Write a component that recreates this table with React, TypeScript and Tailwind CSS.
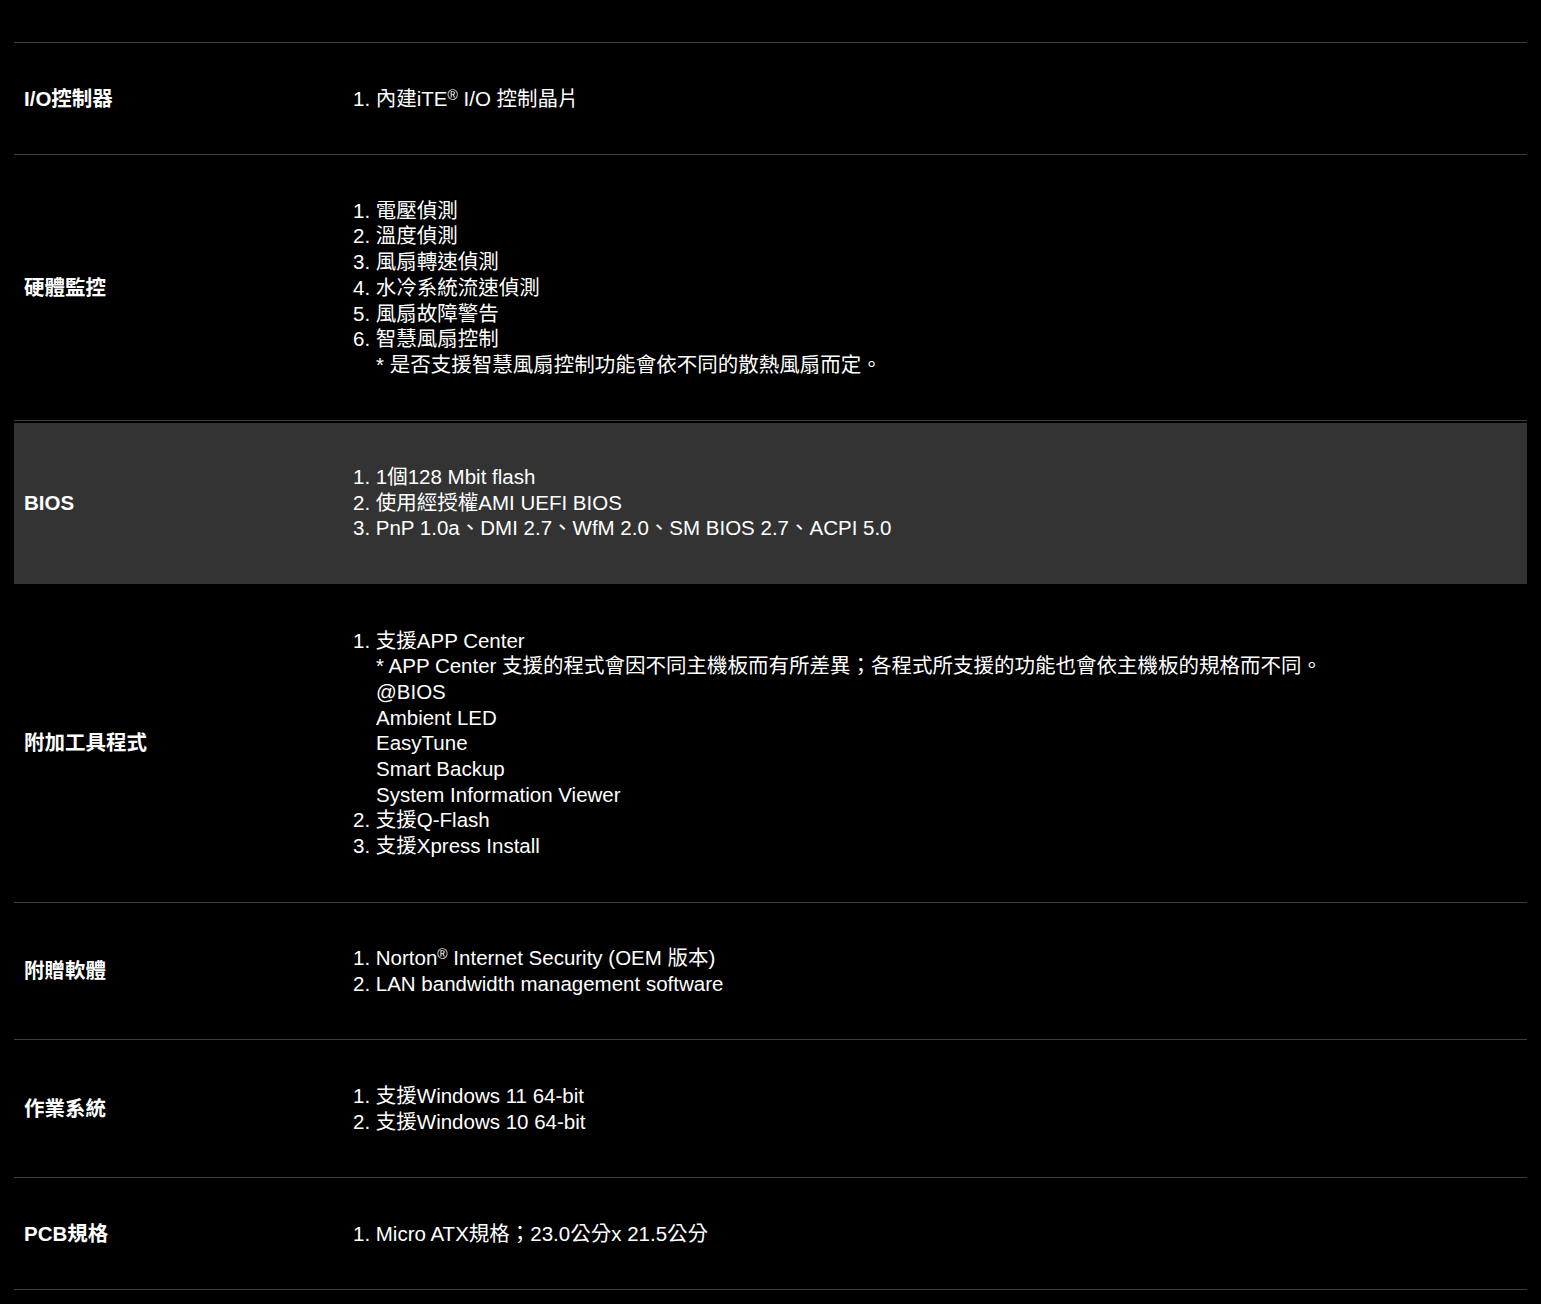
import type { ReactNode } from "react";

type Line = { n?: number; text: ReactNode };
type Spec = { label: string; lines: Line[]; active?: boolean };

// registered mark sits high, about cap height
const Reg = () => <span className="inline-block align-top relative top-[2px] text-[14px] leading-none">®</span>;

const specs: Spec[] = [
   { label: "I/O控制器", lines: [{ n: 1, text: <>內建iTE<Reg /> I/O 控制晶片</> }] },
   {
      label: "硬體監控",
      lines: [
         { n: 1, text: "電壓偵測" },
         { n: 2, text: "溫度偵測" },
         { n: 3, text: "風扇轉速偵測" },
         { n: 4, text: "水冷系統流速偵測" },
         { n: 5, text: "風扇故障警告" },
         { n: 6, text: "智慧風扇控制" },
         { text: "* 是否支援智慧風扇控制功能會依不同的散熱風扇而定。" },
      ],
   },
   {
      label: "BIOS",
      active: true,
      lines: [
         { n: 1, text: "1個128 Mbit flash" },
         { n: 2, text: "使用經授權AMI UEFI BIOS" },
         { n: 3, text: "PnP 1.0a、DMI 2.7、WfM 2.0、SM BIOS 2.7、ACPI 5.0" },
      ],
   },
   {
      label: "附加工具程式",
      lines: [
         { n: 1, text: "支援APP Center" },
         { text: "* APP Center 支援的程式會因不同主機板而有所差異；各程式所支援的功能也會依主機板的規格而不同。" },
         { text: "@BIOS" },
         { text: "Ambient LED" },
         { text: "EasyTune" },
         { text: "Smart Backup" },
         { text: "System Information Viewer" },
         { n: 2, text: "支援Q-Flash" },
         { n: 3, text: "支援Xpress Install" },
      ],
   },
   {
      label: "附贈軟體",
      lines: [
         { n: 1, text: <>Norton<Reg /> Internet Security (OEM 版本)</> },
         { n: 2, text: "LAN bandwidth management software" },
      ],
   },
   {
      label: "作業系統",
      lines: [
         { n: 1, text: "支援Windows 11 64-bit" },
         { n: 2, text: "支援Windows 10 64-bit" },
      ],
   },
   { label: "PCB規格", lines: [{ n: 1, text: "Micro ATX規格；23.0公分x 21.5公分" }] },
];

function SpecRow({ spec }: { spec: Spec }) {
   return (
      <div className={spec.active ? "border-b border-black pt-[2px]" : "border-b border-[#3d3d3d]"}>
         <div className={`grid grid-cols-[339px_1fr] items-center py-[42.7px] ${spec.active ? "bg-[#333333] pt-[40.7px]" : ""}`}>
            <div className="pl-[10px] font-bold">{spec.label}</div>
            <div>
               {spec.lines.map((line, i) => (
                  <div key={i} className={line.n ? "" : "pl-[23px]"}>
                     {line.n ? `${line.n}. ` : ""}
                     {line.text}
                  </div>
               ))}
            </div>
         </div>
      </div>
   );
}

export default function App() {
   return (
      <div className="min-h-screen bg-black text-white pt-[42px] pb-[15px] px-[14px] font-['Liberation_Sans','Noto_Sans_CJK_TC',sans-serif] text-[20.5px] leading-[25.7px]">
         <div className="border-t border-[#3d3d3d]">
            {specs.map((spec) => (
               <SpecRow key={spec.label} spec={spec} />
            ))}
         </div>
      </div>
   );
}
